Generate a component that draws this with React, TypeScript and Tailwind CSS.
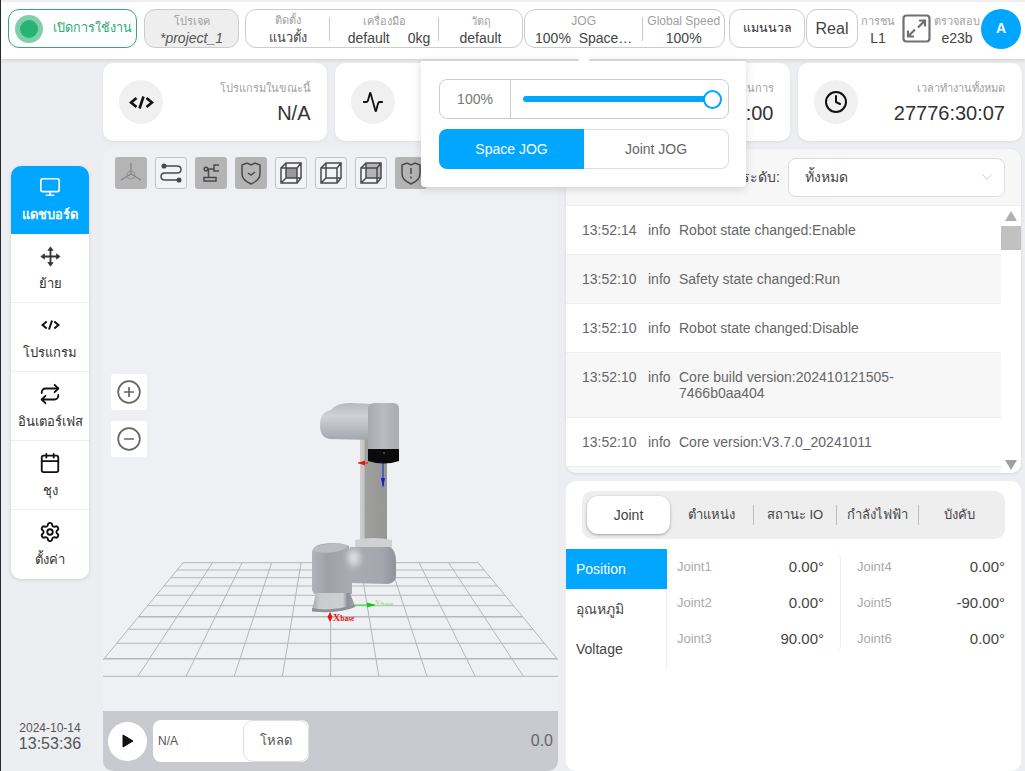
import React from "react";
import { Monitor, Repeat, Calendar, Settings, Activity, Clock, CirclePlus, CircleMinus, ChevronDown } from "lucide-react";

const CodeTag = ({ w, h, sw = 2.6 }: { w: number; h: number; sw?: number }) => (
  <svg width={w} height={h} viewBox="0 0 25 13" fill="none" stroke="currentColor" strokeWidth={sw}>
    <path d="M7.5 2L2 6.5L7.5 11M17.5 2L23 6.5L17.5 11M14.5 0.5L10.5 12.5" />
  </svg>
);

const MoveIcon = () => (
  <svg width="21" height="21" viewBox="0 0 21 21" fill="#333" stroke="#333" strokeWidth="1.8">
    <path d="M10.5 3V18M3 10.5H18" fill="none" />
    <path d="M10.5 0.8L13.2 4.5H7.8ZM10.5 20.2L13.2 16.5H7.8ZM0.8 10.5L4.5 7.8V13.2ZM20.2 10.5L16.5 7.8V13.2Z" strokeWidth="0.6" strokeLinejoin="round" />
  </svg>
);

const HeaderCell = ({ label, value, cls, thai }: { label: string; value: React.ReactNode; cls: string; thai?: boolean }) => (
  <div className={`flex flex-col items-center justify-center pt-[2px] ${cls}`}>
    <span className={`${thai === false ? "text-[12px]" : "text-[11px]"} text-[#a0a0a0] leading-[17px] whitespace-nowrap`}>{label}</span>
    <span className="text-[14px] text-[#444] leading-[17px] whitespace-pre">{value}</span>
  </div>
);

const VDiv = () => <div className="w-px h-[24px] bg-[#c8c8c8] shrink-0" />;

const StatCard = ({ icon, label, value, last }: { icon: React.ReactNode; label: string; value: string; last?: boolean }) => (
  <div className={`flex-1 h-[78px] bg-white rounded-[10px] shadow-[0_1px_3px_rgba(0,0,0,0.08)] flex items-center justify-between pl-[16px] ${last ? "pr-[17px]" : "pr-[16px]"}`}>
    <div className="w-[44px] h-[44px] rounded-full bg-[#f0f0f0] flex items-center justify-center text-[#111] shrink-0">{icon}</div>
    <div className="flex flex-col items-end">
      <span className="text-[11px] text-[#a0a0a0] leading-[16px] pt-[2px] whitespace-nowrap">{label}</span>
      <span className="text-[20px] text-[#333] leading-[28px] mt-[3px] whitespace-nowrap">{value}</span>
    </div>
  </div>
);

const NavItem = ({ icon, label, active, last }: { icon: React.ReactNode; label: string; active?: boolean; last?: boolean }) => (
  <div className={`${active ? "h-[68px] pt-[9px] bg-[#00a6ff] text-white font-bold" : "h-[69px] pt-[10px] bg-white text-[#333]"} flex flex-col items-center justify-start ${!active && !last ? "border-b border-[#eeeeee]" : ""}`}>
    <div className="h-[24px] flex items-center justify-center">{icon}</div>
    <span className="text-[13px] leading-[18px] mt-[7px] whitespace-nowrap">{label}</span>
  </div>
);

const ToolBtn = ({ filled, children }: { filled?: boolean; children: React.ReactNode }) => (
  <div className={`w-[32px] h-[32px] rounded-[3px] flex items-center justify-center shrink-0 ${filled ? "bg-[#b4b4b4]" : "border border-[#c4c4c4] bg-[#f2f3f6]"}`}>
    <svg width="26" height="26" viewBox="0 0 26 26" fill="none" stroke="#4a4a4a" strokeWidth="1.5">{children}</svg>
  </div>
);

const LogRow = ({ time, msg, alt, tall }: { time: string; msg: React.ReactNode; alt?: boolean; tall?: boolean }) => (
  <div className={`flex text-[14px] text-[#666] leading-[16px] pl-[16px] border-b border-[#efefef] ${tall ? "h-[65px]" : "h-[49px]"} ${alt ? "bg-[#f7f7f7]" : "bg-white"} pt-[16px]`}>
    <span className="w-[66px] shrink-0">{time}</span>
    <span className="w-[31px] shrink-0">info</span>
    <span>{msg}</span>
  </div>
);

const JointRow = ({ name, value }: { name: string; value: string }) => (
  <div className="flex items-center justify-between h-[36px]">
    <span className="text-[13px] text-[#aaa]">{name}</span>
    <span className="text-[15px] text-[#444]">{value}</span>
  </div>
);

const gridYs = [562.7, 570, 577.7, 586, 595.3, 605.7, 616.7, 629.3, 643.3, 658.7, 676.3];

const Scene = () => (
  <svg className="absolute left-0 top-0" width="455" height="562" viewBox="103 149 455 562">
    <defs>
      <linearGradient id="col" x1="0" x2="1" y1="0" y2="0">
        <stop offset="0" stopColor="#cdcdcb" />
        <stop offset="0.15" stopColor="#c4c4c2" />
        <stop offset="0.2" stopColor="#9f9f9d" />
        <stop offset="1" stopColor="#969694" />
      </linearGradient>
      <linearGradient id="armH" x1="0" x2="0" y1="0" y2="1">
        <stop offset="0" stopColor="#b5b8bd" />
        <stop offset="0.35" stopColor="#cfd2d6" />
        <stop offset="1" stopColor="#a3a7ad" />
      </linearGradient>
      <linearGradient id="wrist" x1="0" x2="1" y1="0" y2="0">
        <stop offset="0" stopColor="#a8abb0" />
        <stop offset="0.5" stopColor="#b8bbc0" />
        <stop offset="1" stopColor="#a8abb0" />
      </linearGradient>
      <linearGradient id="elbowR" x1="0" x2="1" y1="0" y2="0">
        <stop offset="0" stopColor="#a9acb1" />
        <stop offset="0.7" stopColor="#a3a6ac" />
        <stop offset="1" stopColor="#8f9298" />
      </linearGradient>
      <linearGradient id="elbowL" x1="0" x2="1" y1="0" y2="0">
        <stop offset="0" stopColor="#b0b3b8" />
        <stop offset="0.4" stopColor="#9ea1a7" />
        <stop offset="1" stopColor="#a9acb1" />
      </linearGradient>
      <linearGradient id="flange" x1="0" x2="1" y1="0" y2="0">
        <stop offset="0" stopColor="#a6a9ae" />
        <stop offset="0.18" stopColor="#c9cbce" />
        <stop offset="0.72" stopColor="#cdcfd1" />
        <stop offset="0.82" stopColor="#8e9197" />
        <stop offset="1" stopColor="#a0a3a8" />
      </linearGradient>
      <filter id="soft" x="-50%" y="-50%" width="200%" height="200%">
        <feGaussianBlur stdDeviation="3" />
      </filter>
    </defs>
    <g stroke="#b4b6ba" strokeWidth="1" fill="none">
      {gridYs.map((y, i) => {
        const t = (y - 562.7) / (676.3 - 562.7);
        const half = 147.7 + t * (241 - 147.7);
        return <line key={i} x1={330.6 - half} x2={330.6 + half} y1={y} y2={y} strokeWidth={i === 9 || i === 6 ? 1.5 : 1} />;
      })}
      {[-5, -4, -3, -2, -1, 0, 1, 2, 3, 4, 5].map((k) => (
        <line key={k} x1={330.6 + k * 29.5} y1={562.7} x2={330.6 + k * 48.2} y2={676.3} />
      ))}
    </g>
    <rect x="360" y="436" width="27" height="104" fill="url(#col)" />
    <path d="M331 410 Q336 403 350 403 L372 404 L372 440 L330 439 Q320 438 320 425 Q320 412 331 410Z" fill="url(#armH)" />
    <path d="M368 407 Q369 403 376 403 L393 403 Q399 403 399 409 L399 451 L368 451Z" fill="url(#wrist)" />
    <path d="M368 449 L399 449 L399 461 Q384 466 368 461Z" fill="#0b0b0b" />
    <circle cx="384" cy="453" r="0.8" fill="#888" />
    <path d="M355 540 Q373 536 392 540 L392 548 L355 548Z" fill="#cfd1d3" />
    <path d="M350 547 L390 547 Q396 550 396 562 L396 575 Q396 583 388 584 L350 583Z" fill="url(#elbowR)" />
    <path d="M312 553 Q312 546 322 544 Q338 541 349 546 L352 560 L352 594 L314 594 L312 590Z" fill="url(#elbowL)" />
    <ellipse cx="330" cy="548" rx="17" ry="4.5" fill="#babdc2" transform="rotate(-5 330 548)" />
    <ellipse cx="354" cy="558" rx="6" ry="8" fill="#dfe1e4" filter="url(#soft)" />
    <path d="M316 593 L350 593 L355 606 Q340 613 312 610Z" fill="url(#flange)" />
    <path d="M312 608 Q330 612 355 604.5 L355 607 Q340 614 312 611.5Z" fill="#8e9197" />
    <line x1="358" y1="463" x2="368" y2="463" stroke="#f01010" strokeWidth="1" />
    <path d="M358 463 L365 460.5 L365 465.5Z" fill="#f01010" />
    <line x1="383" y1="463" x2="383" y2="486" stroke="#1020d0" strokeWidth="1" />
    <path d="M383 488 L381 478 L385 478Z" fill="#1020d0" />
    <line x1="355" y1="605" x2="375" y2="605" stroke="#22e022" strokeWidth="1" />
    <path d="M376 605 L367 602.5 L367 607.5Z" fill="#11cc11" />
    <text x="375" y="606" fontFamily="'Liberation Serif', serif" fill="#9adf7a"><tspan fontSize="8">Y</tspan><tspan fontSize="6.5" fontWeight="bold">base</tspan></text>
    <path d="M330 612 L332.5 617 L330 622 L327.5 617Z" fill="#ee1111" />
    <text x="333" y="621" fontWeight="bold" fontFamily="'Liberation Serif', serif" fill="#ee1111"><tspan fontSize="10">X</tspan><tspan fontSize="7.5">base</tspan></text>
  </svg>
);

export default function App() {
  return (
    <div className="relative w-[1025px] h-[771px] overflow-hidden bg-[#eceef1] border-l border-[#2a2a2a] font-['Liberation_Sans','Noto_Sans',sans-serif] flex flex-col">
      {/* header */}
      <div className="h-[59px] shrink-0 bg-white shadow-[0_1px_4px_rgba(0,0,0,0.15)] flex items-center pl-[7px] pr-[3px] pb-[4px] z-10 border-t-2 border-[#efefef]">
        <div className="w-[129px] h-[39px] rounded-[11px] border border-[#3aa57a] flex items-center pl-[6px] shrink-0">
          <div className="w-[28px] h-[28px] rounded-full bg-[#7fd0aa] flex items-center justify-center shrink-0">
            <div className="w-[18px] h-[18px] rounded-full bg-[#28b273]" />
          </div>
          <span className="ml-[10px] text-[12.6px] text-[#2fa878] whitespace-nowrap">เปิดการใช้งาน</span>
        </div>
        <div className="ml-[7px] w-[95px] h-[39px] rounded-[11px] border border-[#cccccc] bg-[#eeeeee] flex flex-col items-center justify-center pt-[2px] shrink-0">
          <span className="text-[11px] text-[#a0a0a0] leading-[17px]">โปรเจค</span>
          <span className="text-[14px] italic text-[#555] leading-[17px]">*project_1</span>
        </div>
        <div className="ml-[6px] w-[278px] h-[39px] rounded-[11px] border border-[#cccccc] flex items-center shrink-0">
          <HeaderCell label="ติดตั้ง" value={<span className="text-[12.7px]">แนวตั้ง</span>} cls="w-[83px]" />
          <VDiv />
          <HeaderCell label="เครื่องมือ" value={<span className="pl-[10px]">default<span className="ml-[18px]">0kg</span></span>} cls="w-[108px]" />
          <VDiv />
          <HeaderCell label="วัตถุ" value="default" cls="w-[83px]" />
        </div>
        <div className="ml-px w-[201px] h-[39px] rounded-[11px] border border-[#cccccc] flex items-center shrink-0">
          <HeaderCell thai={false} label="JOG" value="100%  Space…" cls="w-[118px]" />
          <VDiv />
          <HeaderCell thai={false} label="Global Speed" value="100%" cls="w-[81px]" />
        </div>
        <div className="ml-[4px] w-[76px] h-[39px] rounded-[11px] border border-[#cccccc] flex items-center justify-center text-[12.5px] text-[#333] shrink-0">แมนนวล</div>
        <div className="ml-px w-[52px] h-[39px] rounded-[11px] border border-[#cccccc] flex items-center justify-center text-[16px] text-[#444] shrink-0">Real</div>
        <div className="ml-[3px] w-[34px] shrink-0"><HeaderCell label="การชน" value="L1" cls="w-full" /></div>
        <svg className="ml-[7px] shrink-0" width="29" height="29" viewBox="0 0 29 29" fill="none" stroke="#707070" strokeWidth="2.2">
          <rect x="1.5" y="1.5" width="26" height="26" rx="3" />
          <path d="M17 6.5H23V12.5M23 6.5L16 13.5M12 22.5H6V16.5M6 22.5L13 15.5" />
        </svg>
        <div className="ml-[2px] w-[48px] shrink-0"><HeaderCell label="ตรวจสอบ" value="e23b" cls="w-full" /></div>
        <div className="w-[40px] h-[40px] rounded-full bg-[#00a6ff] flex items-center justify-center text-white font-bold text-[14px] shrink-0">A</div>
      </div>

      {/* body */}
      <div className="flex-1 flex min-h-0">
        <div className="w-[102px] shrink-0 flex flex-col pl-[10px]">
          <div className="w-[78px] mt-[107px] rounded-[10px] overflow-hidden shadow-[0_1px_4px_rgba(0,0,0,0.12)]">
            <NavItem active label="แดชบอร์ด" icon={<Monitor size={22} strokeWidth={1.8} />} />
            <NavItem label="ย้าย" icon={<MoveIcon />} />
            <NavItem label="โปรแกรม" icon={<span className="text-[#111]"><CodeTag w={19} h={10} /></span>} />
            <NavItem label="อินเตอร์เฟส" icon={<Repeat size={22} strokeWidth={2} className="text-[#111]" />} />
            <NavItem label="ชุง" icon={<Calendar size={22} strokeWidth={2} className="text-[#111]" />} />
            <NavItem last label="ตั้งค่า" icon={<Settings size={22} strokeWidth={2} className="text-[#111]" />} />
          </div>
          <div className="mt-auto mb-[18px] -ml-[10px] w-[98px] flex flex-col items-center text-[#555]">
            <span className="text-[12px] leading-[14px]">2024-10-14</span>
            <span className="text-[16px] leading-[18px]">13:53:36</span>
          </div>
        </div>

        <div className="flex-1 min-w-0 pr-[3px] pt-[4px] flex flex-col gap-[8px]">
          <div className="flex gap-[8px] shrink-0">
            <StatCard icon={<CodeTag w={25} h={13} />} label="โปรแกรมในขณะนี้" value="N/A" />
            <StatCard icon={<Activity size={22} strokeWidth={2} />} label="สถานะ" value="Run" />
            <StatCard icon={<Clock size={22} />} label="เวลาดำเนินการ" value="00:00:00" />
            <StatCard last icon={<Clock size={24} strokeWidth={2} />} label="เวลาทำงานทั้งหมด" value="27776:30:07" />
          </div>

          <div className="flex-1 min-h-0 flex gap-[8px]">
            {/* 3D view */}
            <div className="relative w-[455px] rounded-[10px] overflow-hidden bg-[#eef0f4] flex flex-col">
              <div className="relative flex-1 min-h-0">
                <Scene />
                <div className="relative flex gap-[8px] pl-[12px] pt-[8px]">
                  <ToolBtn filled>
                    <path d="M13 3V14M13 14L3 20M13 14L23 20" stroke="#777" strokeWidth="1" />
                    <circle cx="13" cy="15" r="4" stroke="#888" strokeWidth="0.8" />
                  </ToolBtn>
                  <ToolBtn>
                    <circle cx="6" cy="6" r="1.8" fill="#4a4a4a" />
                    <circle cx="21" cy="20" r="1.8" fill="#4a4a4a" />
                    <path d="M6 6H19Q23 6 23 9.5Q23 13 19 13H7Q3 13 3 16.5Q3 20 7 20H21" />
                  </ToolBtn>
                  <ToolBtn filled>
                    <rect x="6" y="17.5" width="12" height="3.5" />
                    <path d="M10.5 17.5V9M10 9H16M21 5H16V11H21" />
                    <circle cx="8" cy="9" r="1.8" />
                  </ToolBtn>
                  <ToolBtn filled>
                    <path d="M4 5L9 3L13 5L17 3L22 5V14Q22 20 13 24Q4 20 4 14Z" />
                    <path d="M10 13L13 15L17 12" />
                  </ToolBtn>
                  <ToolBtn>
                    <rect x="8" y="8" width="11" height="10" fill="#9a9a9a" stroke="none" />
                    <path d="M3 8H19V23H3ZM3 8L8 3H23V18L19 23M8 3V18H23M8 18L3 23M19 8L23 3" />
                  </ToolBtn>
                  <ToolBtn>
                    <path d="M3 8H19V23H3ZM3 8L8 3H23V18L19 23M8 3V18H23M8 18L3 23M19 8L23 3" />
                  </ToolBtn>
                  <ToolBtn>
                    <path d="M8 3H23V18H8Z" fill="#b5b5b5" stroke="none" />
                    <path d="M3 8H19V23H3ZM3 8L8 3H23V18L19 23M8 3V18H23M8 18L3 23M19 8L23 3" />
                  </ToolBtn>
                  <ToolBtn filled>
                    <path d="M4 5L9 3L13 5L17 3L22 5V14Q22 20 13 24Q4 20 4 14Z" />
                    <path d="M13 8V14M13 16.5V18.5" />
                  </ToolBtn>
                </div>
                <div className="absolute left-[8px] top-[225px] flex flex-col gap-[11px]">
                  <div className="w-[36px] h-[36px] rounded-[3px] bg-white flex items-center justify-center text-[#666]"><CirclePlus size={26} strokeWidth={1.6} /></div>
                  <div className="w-[36px] h-[36px] rounded-[3px] bg-white flex items-center justify-center text-[#666]"><CircleMinus size={26} strokeWidth={1.6} /></div>
                </div>
              </div>
              <div className="h-[60px] shrink-0 bg-[#c9cacf] flex items-center pl-[5px] pr-[5px]">
                <div className="w-[39px] h-[39px] rounded-full bg-white flex items-center justify-center shrink-0">
                  <svg width="12" height="14" viewBox="0 0 12 14"><path d="M1 1L11 7L1 13Z" fill="#111" stroke="#111" strokeLinejoin="round" /></svg>
                </div>
                <div className="ml-[6px] w-[156px] h-[42px] rounded-[8px] bg-white flex items-center justify-between shrink-0">
                  <span className="pl-[5px] text-[12px] text-[#555]">N/A</span>
                  <div className="w-[66px] h-full rounded-[10px] bg-white border border-[#dddddd] flex items-center justify-center text-[13px] text-[#555]">โหลด</div>
                </div>
                <span className="ml-auto text-[16px] text-[#666]">0.0</span>
              </div>
            </div>

            {/* right column */}
            <div className="w-[455px] flex flex-col gap-[8px]">
              <div className="h-[324px] shrink-0 rounded-[10px] overflow-hidden bg-[#f7f7f8] shadow-[0_1px_3px_rgba(0,0,0,0.1)] flex flex-col">
                <div className="h-[57px] shrink-0 flex items-center justify-end pr-[16px] border-b border-[#eeeeee]">
                  <span className="text-[14px] text-[#444] mr-[8px]">ระดับ:</span>
                  <div className="w-[217px] h-[39px] rounded-[8px] bg-white border border-[#dddddd] flex items-center justify-between pl-[16px] pr-[8px]">
                    <span className="text-[14px] text-[#444]">ทั้งหมด</span>
                    <ChevronDown size={18} strokeWidth={1.2} className="text-[#c4c4c4]" />
                  </div>
                </div>
                <div className="flex flex-1 min-h-0">
                  <div className="flex-1 min-w-0 overflow-hidden self-start h-[261px]">
                    <LogRow time="13:52:14" msg="Robot state changed:Enable" />
                    <LogRow alt time="13:52:10" msg="Safety state changed:Run" />
                    <LogRow time="13:52:10" msg="Robot state changed:Disable" />
                    <LogRow alt tall time="13:52:10" msg={<>Core build version:202410121505-<br />7466b0aa404</>} />
                    <LogRow time="13:52:10" msg="Core version:V3.7.0_20241011" />
                  </div>
                  <div className="w-[20px] shrink-0 bg-white flex flex-col items-center">
                    <svg className="mt-[5px]" width="12" height="10" viewBox="0 0 12 10"><path d="M6 0L12 10H0Z" fill="#b0b0b0" /></svg>
                    <div className="w-full h-[24px] bg-[#c1c1c1] mt-[5px]" />
                    <svg className="mt-auto mb-[3px]" width="12" height="10" viewBox="0 0 12 10"><path d="M0 0H12L6 10Z" fill="#a0a0a0" /></svg>
                  </div>
                </div>
              </div>

              <div className="flex-1 min-h-0 rounded-[10px] bg-white pt-[10px]">
                <div className="mx-[16px] h-[48px] rounded-[10px] bg-[#eeeeee] flex items-center pl-[5px] text-[13px] text-[#444]">
                  <div className="w-[83px] h-[38px] rounded-[11px] bg-white shadow-[0_1px_3px_rgba(0,0,0,0.35)] flex items-center justify-center text-[14px]">Joint</div>
                  <div className="w-[83px] flex items-center justify-center whitespace-nowrap">ตำแหน่ง</div>
                  <div className="w-px h-[20px] bg-[#bcbcbc]" />
                  <div className="w-[82px] flex items-center justify-center whitespace-nowrap">สถานะ IO</div>
                  <div className="w-px h-[20px] bg-[#bcbcbc]" />
                  <div className="w-[81px] flex items-center justify-center whitespace-nowrap">กำลังไฟฟ้า</div>
                  <div className="w-px h-[20px] bg-[#bcbcbc]" />
                  <div className="w-[80px] flex items-center justify-center whitespace-nowrap">บังคับ</div>
                </div>
                <div className="flex mt-[10px]">
                  <div className="w-[101px] shrink-0 border-r border-[#eeeeee] h-[120px] text-[14px] text-[#444]">
                    <div className="h-[40px] -mr-px bg-[#00a6ff] text-white flex items-center pl-[10px]">Position</div>
                    <div className="h-[40px] flex items-center pl-[10px]">อุณหภูมิ</div>
                    <div className="h-[40px] flex items-center pl-[10px]">Voltage</div>
                  </div>
                  <div className="w-[174px] shrink-0 pl-[10px] pr-[16px] border-r border-[#eeeeee] h-[106px] rounded-r-[10px]">
                    <JointRow name="Joint1" value="0.00°" />
                    <JointRow name="Joint2" value="0.00°" />
                    <JointRow name="Joint3" value="90.00°" />
                  </div>
                  <div className="flex-1 pl-[16px] pr-[16px]">
                    <JointRow name="Joint4" value="0.00°" />
                    <JointRow name="Joint5" value="-90.00°" />
                    <JointRow name="Joint6" value="0.00°" />
                  </div>
                </div>
              </div>
            </div>
          </div>
        </div>
      </div>

      {/* JOG popover */}
      <div className="absolute left-[420px] top-[61px] w-[325px] h-[126px] bg-white rounded-b-[4px] shadow-[0_2px_10px_rgba(0,0,0,0.15)] z-20 pl-[18px] pr-[17px] pt-[18px]">
        <div className="absolute left-[158px] -top-[4px] w-[10px] h-[10px] rotate-45 bg-white" />
        <div className="h-[40px] rounded-[8px] border border-[#cccccc] flex items-center">
          <div className="w-[71px] h-full border-r border-[#cccccc] flex items-center justify-center text-[14px] text-[#777]">100%</div>
          <div className="relative flex-1 h-full flex items-center pl-[12px] pr-[15px]">
            <div className="h-[6px] flex-1 rounded-full bg-[#00a6ff]" />
            <div className="absolute right-[6px] top-[10px] w-[19px] h-[19px] rounded-full bg-white border-2 border-[#00a6ff]" />
          </div>
        </div>
        <div className="mt-[10px] h-[40px] flex text-[14px]">
          <div className="w-[145px] rounded-l-[8px] bg-[#00a6ff] text-white flex items-center justify-center">Space JOG</div>
          <div className="flex-1 rounded-r-[8px] border border-l-0 border-[#dddddd] text-[#666] flex items-center justify-center">Joint JOG</div>
        </div>
      </div>
    </div>
  );
}
